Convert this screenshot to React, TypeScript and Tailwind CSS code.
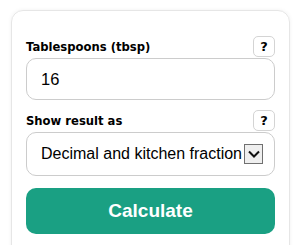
import { useState } from 'react';

function HelpButton() {
    return (
        <button
            type="button"
            className="w-[22px] h-[21px] flex items-center justify-center rounded-[5px] border border-[#d4d4d4] bg-white text-[13px] font-bold text-black leading-none"
            style={{ fontFamily: '"DejaVu Sans", sans-serif' }}
        >
            ?
        </button>
    );
}

export default function App() {
    const [tbsp, setTbsp] = useState("16");
    const [mode, setMode] = useState("both");

    return (
        <div className="w-[301px] h-[245px] bg-white overflow-hidden pt-[10px] px-[11px]" style={{ fontFamily: '"Liberation Sans", Arial, sans-serif' }}>
            <div className="h-[250px] rounded-[12px] border border-[#e6e6e6] shadow-[0_0_4px_rgba(0,0,0,0.06)] px-[14px] pt-[25px]">
                {/* Tablespoons */}
                <div className="flex items-end justify-between">
                    <label className="text-[11.6px] font-bold text-black leading-[16px] pb-[2px]" style={{ fontFamily: '"DejaVu Sans", sans-serif' }}>
                        Tablespoons (tbsp)
                    </label>
                    <HelpButton />
                </div>
                <input
                    value={tbsp}
                    onChange={(e) => setTbsp(e.target.value)}
                    className="mt-[1px] w-full h-[42px] rounded-[10px] border border-[#cccccc] px-[14px] text-[16.5px] text-black outline-none"
                />

                {/* Result format */}
                <div className="flex items-end justify-between mt-[10px]">
                    <label className="text-[11.6px] font-bold text-black leading-[16px] pb-[2px]" style={{ fontFamily: '"DejaVu Sans", sans-serif' }}>
                        Show result as
                    </label>
                    <HelpButton />
                </div>
                <div className="relative mt-[1px]">
                    <select
                        value={mode}
                        onChange={(e) => setMode(e.target.value)}
                        className="w-full h-[44px] rounded-[10px] border border-[#cccccc] pl-[14px] pr-[30px] text-[16px] text-black bg-white appearance-none outline-none"
                    >
                        <option value="both">Decimal and kitchen fraction</option>
                        <option value="decimal">Decimal</option>
                        <option value="fraction">Kitchen fraction</option>
                    </select>
                    <span className="pointer-events-none absolute right-[12px] top-[12px] w-[19px] h-[20px] border border-[#707070] bg-[#efefef] flex items-center justify-center">
                        <svg width="12" height="8" viewBox="0 0 12 8">
                            <path d="M1 1.5 L6 6.5 L11 1.5" fill="none" stroke="#111" strokeWidth="2" />
                        </svg>
                    </span>
                </div>

                <button
                    type="button"
                    className="mt-[12px] w-full h-[46px] rounded-[10px] bg-[#1aa083] text-white text-[19px] font-bold"
                >
                    Calculate
                </button>
            </div>
        </div>
    );
}
